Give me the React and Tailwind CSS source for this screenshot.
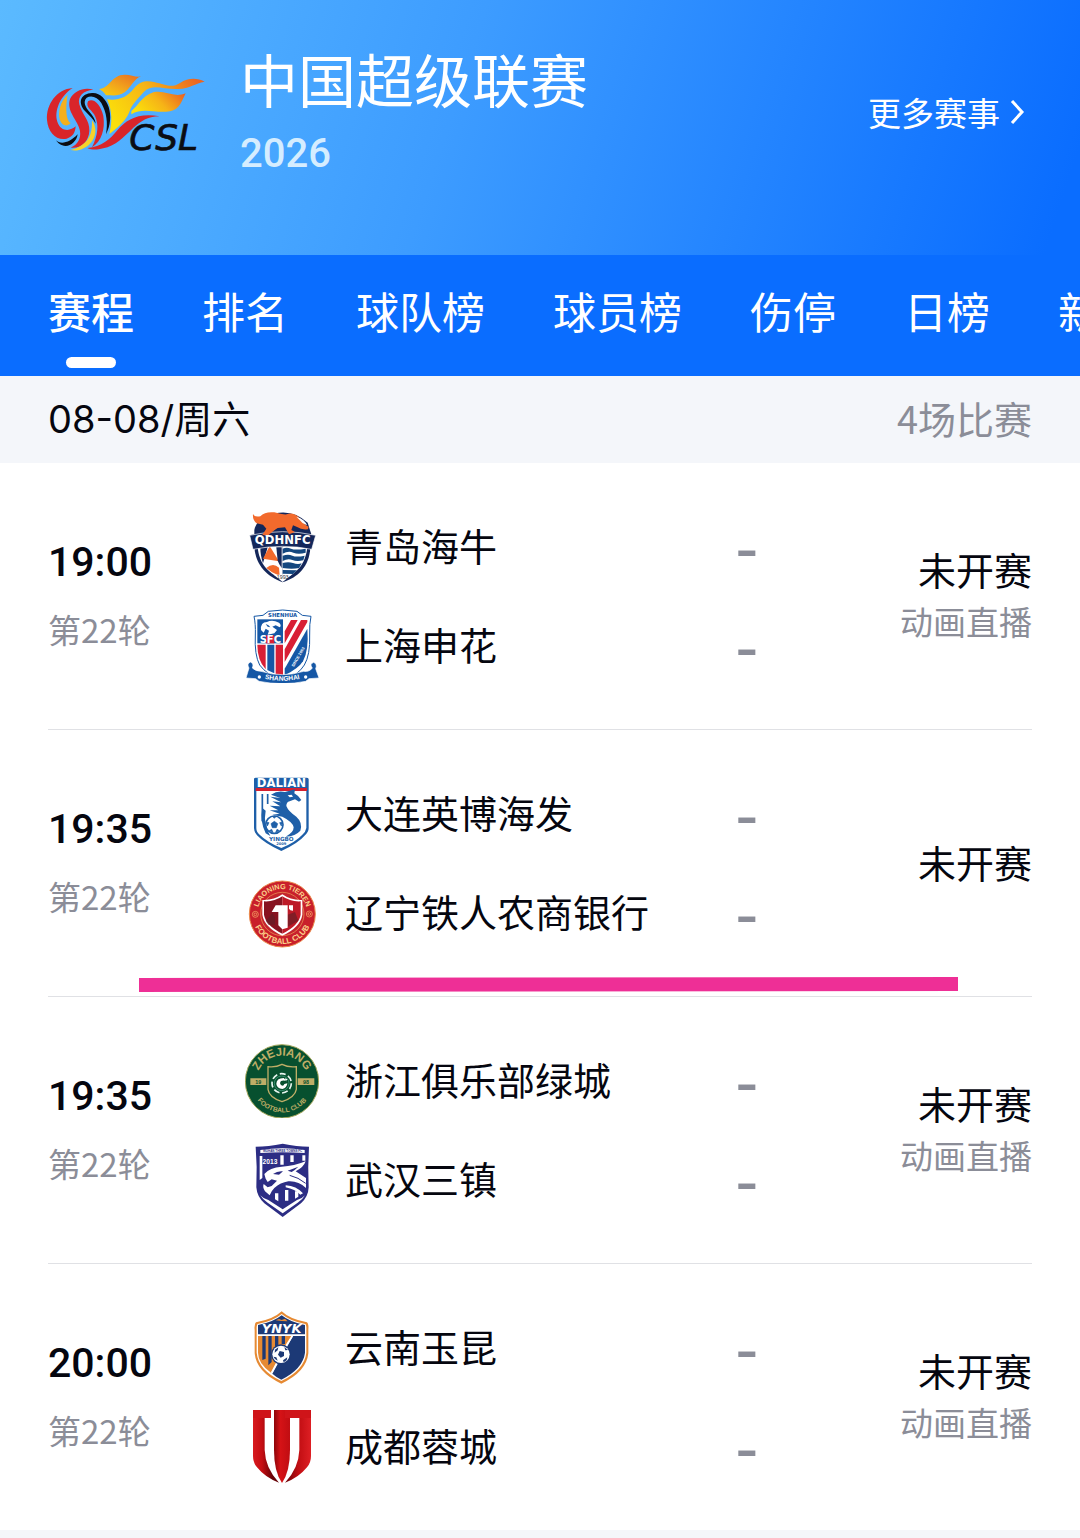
import React, { useState } from 'react';

const CslLogo = () => (
    <svg viewBox="54 60 474 246" className="w-[158px] h-[82px] shrink-0 overflow-visible" role="img" aria-label="CSL">
        <defs>
            <linearGradient id="flameTop" x1="0" x2="1" y1="1" y2="0">
                <stop offset="0" stopColor="#f8d30c" />
                <stop offset="0.45" stopColor="#f2a51c" />
                <stop offset="1" stopColor="#e86a22" />
            </linearGradient>
            <linearGradient id="flameMain" x1="0" x2="1" y1="0.6" y2="0.2">
                <stop offset="0" stopColor="#fbe00a" />
                <stop offset="0.5" stopColor="#f6b417" />
                <stop offset="1" stopColor="#ea6522" />
            </linearGradient>
        </defs>
        <path d="M207 114 C240 112 245 70 285 71 C305 71 318 80 333 76 C310 85 305 108 285 123 C265 138 245 132 228 133 C222 124 216 118 207 114Z" fill="url(#flameTop)" />
        <path d="M238 250 C246 215 248 180 231 145 C262 150 292 140 312 112 C330 90 350 88 372 93 C410 102 425 112 450 96 C475 80 500 80 524 92 C495 97 480 112 445 114 C400 116 368 96 342 122 C322 145 305 160 298 183 C288 210 262 230 238 250Z" fill="url(#flameMain)" />
        <path d="M304 180 C325 165 335 135 370 124 C405 116 430 142 467 127 C455 150 450 175 420 181 C375 188 340 168 304 190Z" fill="url(#flameMain)" />
        <path d="M389 196 C350 197 335 210 310 230 C280 260 255 285 220 292 C200 297 185 297 172 291 C215 288 240 265 262 238 C290 205 325 185 389 196Z" fill="#d9252a" />
        <path d="M128 111 C80 115 48 160 51 207 C54 245 80 270 110 263 C128 258 136 245 137 226 C120 242 92 242 82 212 C72 180 90 135 128 111Z" fill="#d9252a" />
        <path d="M113 131 C92 150 82 182 90 208 C98 228 114 226 122 216 C105 205 108 160 113 131Z" fill="#f5b01d" />
        <path d="M120 144 C132 118 165 107 190 116 C160 118 142 136 148 160 C155 190 180 207 178 240 C176 270 155 294 122 290 C145 280 153 262 150 240 C145 208 108 182 120 144Z" fill="#d9252a" />
        <path d="M186 126 C210 124 228 145 236 168 C244 195 242 222 228 250 C234 215 230 185 214 156 C203 138 184 132 170 140 C158 152 166 168 178 182 C190 196 196 205 197 218 C190 204 178 194 165 180 C142 154 152 128 186 126Z" fill="#0b0d13" />
        <path d="M174 151 C190 140 212 160 220 195 C226 235 215 270 186 289 C205 250 206 220 196 197 C188 178 165 170 174 151Z" fill="#d9252a" />
        <path d="M186 208 C201 230 200 258 180 278 C166 292 145 302 122 297 C150 290 172 275 181 250 C186 236 186 222 186 208Z" fill="#f7d22a" />
        <path d="M78 268 C92 282 120 275 143 250 C140 270 124 285 107 285 C92 284 84 276 78 268Z" fill="#0b0d13" />
        <text x="298" y="298" fontFamily="DejaVu Sans" fontSize="108" fontStyle="italic" fill="#0b0d13" stroke="#0b0d13" strokeWidth="2">CSL</text>
    </svg>
);

const HainiuLogo = () => (
    <svg viewBox="30 30 222 222" className="size-[74px]" aria-hidden="true">
        <path d="M143 247 C100 230 62 200 58 140 L58 90 Q66 52 120 40 Q175 28 218 68 L228 100 L226 145 C222 200 190 232 143 247Z" fill="#14275a" />
        <path d="M143 238 C105 222 72 195 68 140 L143 140Z" fill="#fff" />
        <path d="M143 238 C182 222 212 195 217 140 L143 140Z" fill="#fff" />
        <path d="M76 142 L98 142 L84 190 C78 172 76 156 76 142Z" fill="#14275a" />
        <path d="M104 138 L132 184 L84 176Z M94 204 Q114 186 132 203 L134 228 L110 216Z" fill="#f26a2c" />
        <path d="M124 142 L140 142 L140 204 Q132 192 128 182Z" fill="#14275a" />
        <path d="M143 146 Q155 141 168 146 T212 146 V158 Q190 164 175 158 T143 161Z M143 167 Q160 162 172 167 T209 167 L205 181 Q185 186 172 180 T143 183Z M143 189 Q160 184 174 189 T200 190 L192 204 Q172 208 143 204Z M143 210 L186 211 L174 222 L143 221Z" fill="#14477f" />
        <path d="M44 106 Q143 84 242 106 L230 148 Q143 130 54 148Z" fill="#14275a" stroke="#fff" strokeWidth="2" />
        <path d="M54 42 Q58 52 76 49 Q90 34 118 37 Q140 44 155 43 Q175 35 196 56 Q210 76 221 80 L219 88 Q198 90 188 82 L174 76 L169 90 L180 96 L162 103 L150 82 L128 84 L119 90 L97 108 L82 104 L94 86 L84 74 L65 70 Q52 60 54 42Z" fill="#f26a2c" />
        <path d="M184 50 Q210 58 216 76 Q202 72 194 60Z" fill="#fff" />
        <text x="143" y="131" textAnchor="middle" fontFamily="DejaVu Sans" fontSize="35" fontWeight="700" fill="#fff">QDHNFC</text>
        <path d="M116 224 H170 L143 246Z" fill="#fff" />
        <text x="143" y="238" textAnchor="middle" fontFamily="Liberation Sans" fontSize="16" fill="#333">1993</text>
    </svg>
);

const ShenhuaLogo = () => (
    <svg viewBox="30 27 222 222" className="size-[74px]" aria-hidden="true">
        <path d="M57 49 L84 46 L100 34 Q143 26 186 34 L202 46 L228 49 Q223 70 224 105 Q226 165 208 195 Q190 225 143 243 Q96 225 74 195 Q58 165 61 105 Q62 70 57 49Z" fill="#fff" stroke="#1557a5" strokeWidth="3" />
        <text x="143" y="51" textAnchor="middle" fontFamily="DejaVu Sans" fontSize="16" fontWeight="700" fill="#1557a5">SHENHUA</text>
        <path d="M67 58 H144 V130 H67Z" fill="#1557a5" />
        <path d="M78 90 Q76 66 96 66 Q112 58 132 68 Q141 76 134 82 L122 76 L112 80 L126 90 L118 100 L98 104 L102 92 L92 86 L86 98Z" fill="#fff" />
        <path d="M92 72 Q102 74 106 82 L98 80Z" fill="#1557a5" />
        <path d="M93 106 H118 V130 H93Z" fill="#d81f35" />
        <text x="106" y="128" textAnchor="middle" fontFamily="DejaVu Sans" fontSize="30" fontWeight="700" fill="#fff">SFC</text>
        <path d="M67 134 H92 V208 Q67 180 67 134Z M122 134 H144 V230 L122 222Z" fill="#d81f35" />
        <path d="M97 134 H118 V220 Q108 216 97 210Z" fill="#1557a5" />
        <path d="M168 60 H188 L149 130 V94Z M198 60 H217 V66 L149 186 V148Z" fill="#d81f35" />
        <path d="M217 86 Q222 150 204 184 Q190 206 149 226 V206Z" fill="#1557a5" />
        <text transform="translate(176 202) rotate(-60)" fontFamily="Liberation Sans" fontSize="12" fontWeight="700" fill="#fff">SINCE 1993</text>
        <path d="M46 186 Q34 192 42 204 L33 234 L62 236 L72 244 Q143 258 212 244 L222 236 L252 234 L242 206 Q248 192 236 187 Q222 192 232 204 Q224 216 206 214 Q143 234 78 214 Q62 214 52 204 Q58 190 46 186Z" fill="#1557a5" stroke="#fff" strokeWidth="2" />
        <path id="shBanner" d="M84 235 Q143 250 200 235" fill="none" />
        <text fontFamily="Liberation Sans" fontSize="20" fontWeight="700" fill="#fff" textAnchor="middle">
            <textPath href="#shBanner" startOffset="50%">SHANGHAI</textPath>
        </text>
        <circle cx="73" cy="231" r="5" fill="#fff" />
        <circle cx="212" cy="231" r="5" fill="#fff" />
    </svg>
);

const DalianLogo = () => (
    <svg viewBox="30 27 222 222" className="size-[74px]" aria-hidden="true">
        <path d="M57 32 Q58 29 62 29 H216 Q221 29 221 34 V180 Q221 192 210 202 Q190 226 139 249 Q88 226 66 202 Q57 192 57 180Z" fill="#1e5fa8" />
        <path d="M64 69 H214 V180 Q212 192 202 200 Q182 222 139 240 Q96 222 74 200 Q64 192 64 180Z" fill="#fff" />
        <path d="M62 60 H216 V69 H62Z" fill="#d5202f" />
        <text x="139" y="56" textAnchor="middle" fontFamily="DejaVu Sans" fontSize="35" fontWeight="700" fill="#fff">DALIAN</text>
        <path d="M82 78 V160 M98 78 V108" stroke="#1e5fa8" strokeWidth="5" />
        <path d="M108 80 Q128 66 150 72 L180 64 L178 76 Q192 84 199 96 L192 101 L180 94 L164 100 Q154 102 154 114 Q160 130 184 146 Q204 164 196 188 Q182 204 152 206 Q176 194 176 178 Q174 162 142 146 L112 140 L134 137 L104 127 L130 127 L104 113 L136 115 L112 100 L138 103 L106 86 L136 90Z" fill="#1e5fa8" />
        <path d="M82 120 Q74 160 92 196 L106 204 Q84 170 92 128Z" fill="#1e5fa8" />
        <path d="M158 82 L170 80 L174 86 L164 88Z" fill="#fff" />
        <circle cx="118" cy="170" r="26" fill="#fff" stroke="#1e5fa8" strokeWidth="5" />
        <path d="M118 160 L128 167 L124 179 H112 L108 167Z M112 145 H124 L118 151Z M94 162 L102 164 L97 174Z M142 162 L134 164 L139 174Z M103 188 L110 184 L114 193Z M133 188 L126 184 L122 193Z" fill="#1e5fa8" stroke="#1e5fa8" strokeWidth="2" />
        <text x="139" y="220" textAnchor="middle" fontFamily="DejaVu Sans" fontSize="17" fontWeight="700" fill="#1e5fa8">YINGBO</text>
        <text x="139" y="231" textAnchor="middle" fontFamily="DejaVu Sans" fontSize="11" fontWeight="700" fill="#1e5fa8">2009</text>
    </svg>
);

const TierenLogo = () => (
    <svg viewBox="30 24 222 222" className="size-[74px]" aria-hidden="true">
        <circle cx="142" cy="138" r="99" fill="#c9202b" stroke="#eb8a4c" strokeWidth="3" />
        <circle cx="142" cy="138" r="65" fill="#c4252d" stroke="#f0a25a" strokeWidth="2" />
        <path d="M82 96 Q115 98 142 79 Q169 98 202 96 V140 Q196 178 142 203 Q88 178 82 140Z" fill="#fff" />
        <path d="M87 100 Q117 102 142 85 V197 Q92 172 87 140Z" fill="#871320" />
        <path d="M197 100 Q167 102 142 85 V197 Q192 172 197 140Z" fill="#bd1a27" />
        <path d="M92 158 L112 136 L120 148 V170 H100Z M158 140 L180 132 L190 158 L158 176Z" fill="#611e26" opacity="0.65" />
        <path d="M110 132 L122 112 H158 V179 L142 184 L130 172 V132Z M162 112 H174 V128 Q164 128 162 122Z" fill="#fff" />
        <path id="trTop" d="M67 138 A75 75 0 0 1 217 138" fill="none" />
        <path id="trBottom" d="M52 138 A90 90 0 0 0 232 138" fill="none" />
        <text fontFamily="Liberation Sans" fontSize="22" fontWeight="700" fill="#fbd08a" textAnchor="middle">
            <textPath href="#trTop" startOffset="50%">LIAONING TIEREN</textPath>
        </text>
        <text fontFamily="Liberation Sans" fontSize="24" fontWeight="700" fill="#fbd08a" textAnchor="middle">
            <textPath href="#trBottom" startOffset="50%">FOOTBALL CLUB</textPath>
        </text>
        <g fill="none" stroke="#fbb56c" strokeWidth="2">
            <circle cx="61" cy="139" r="9" />
            <circle cx="61" cy="139" r="4" />
            <circle cx="223" cy="138" r="9" />
            <circle cx="223" cy="138" r="4" />
        </g>
    </svg>
);

const ZhejiangLogo = () => (
    <svg viewBox="30 30 222 222" className="size-[74px]" aria-hidden="true">
        <circle cx="141" cy="142" r="110" fill="#07502f" stroke="#a5a75b" strokeWidth="3" />
        <path d="M46 133 H94 V153 H46Z M188 133 H238 V153 H188Z" fill="#bfae67" />
        <text x="70" y="149" textAnchor="middle" fontFamily="Liberation Sans" fontSize="16" fontWeight="700" fill="#07502f">19</text>
        <text x="213" y="149" textAnchor="middle" fontFamily="Liberation Sans" fontSize="16" fontWeight="700" fill="#07502f">98</text>
        <path d="M99 98 Q122 101 141 91 Q160 101 184 98 V166 Q180 190 141 203 Q102 190 99 166Z" fill="#07502f" stroke="#bfae67" strokeWidth="4" />
        <circle cx="140" cy="148" r="29" fill="none" stroke="#e7f5ef" strokeWidth="5" strokeDasharray="18 8" />
        <circle cx="140" cy="148" r="22" fill="none" stroke="#4dab8b" strokeWidth="2" />
        <path d="M146 132 Q124 132 124 150 Q126 164 142 165 Q156 162 157 148 L148 150 Q146 157 139 154 Q132 148 138 141 Q146 138 156 142Z M150 133 L158 136 L152 141Z" fill="#fff" />
        <path id="zjTop" d="M64 142 A77 77 0 0 1 218 142" fill="none" />
        <path id="zjBottom" d="M48 142 A93 93 0 0 0 234 142" fill="none" />
        <text fontFamily="Liberation Sans" fontSize="35" fontWeight="700" fill="#bfae67" textAnchor="middle">
            <textPath href="#zjTop" startOffset="50%">ZHEJIANG</textPath>
        </text>
        <text fontFamily="Liberation Sans" fontSize="20" fontWeight="700" fill="#bfae67" textAnchor="middle">
            <textPath href="#zjBottom" startOffset="50%">FOOTBALL CLUB</textPath>
        </text>
    </svg>
);

const WuhanLogo = () => (
    <svg viewBox="30 27 222 222" className="size-[74px]" aria-hidden="true">
        <path d="M62 38 Q100 38 143 29 Q186 38 222 38 Q218 100 221 160 Q220 188 198 208 L143 249 L88 208 Q66 188 64 160 Q67 100 62 38Z" fill="#2c2d84" />
        <path d="M76 48 Q143 38 209 48 V57 Q143 52 76 57Z" fill="#fff" />
        <text x="143" y="54" textAnchor="middle" fontFamily="Liberation Sans" fontSize="9" fontWeight="700" fill="#2c2d84">WUHAN THREE TOWNS FC</text>
        <path d="M74 66 H82 V132 L74 138Z M136 64 H146 V92 H136Z M166 64 H176 V84 H166Z M202 64 H211 V80 H202Z M120 178 H130 V202 L120 196Z M150 168 H160 V200 H150Z M180 172 H190 V188 L180 194Z" fill="#fff" />
        <path d="M88 120 Q104 100 140 98 Q178 96 212 82 Q206 100 182 112 Q200 124 213 132 V162 Q190 140 160 142 Q136 146 118 162 Q108 172 104 184 L90 172 Q82 160 86 150 L98 160 L110 156 L126 140 L110 136 L98 144 L92 134Z" fill="#fff" />
        <path d="M114 120 Q128 110 144 112 L132 122Z M158 110 Q174 104 190 98 Q180 108 170 114Z" fill="#2c2d84" />
        <path d="M164 124 Q190 130 212 148" fill="none" stroke="#2c2d84" strokeWidth="3" />
        <path d="M152 154 Q184 156 204 178 L196 182 Q180 166 152 160Z" fill="#fff" />
        <path d="M76 184 Q84 198 98 206 L143 238 L188 206 Q202 198 210 184 Q202 194 186 198 L143 226 L100 198 Q84 194 76 184Z" fill="#fff" />
        <text x="105" y="89" textAnchor="middle" fontFamily="Liberation Sans" fontSize="20" fontWeight="700" fill="#fff">2013</text>
    </svg>
);

const YunnanLogo = () => (
    <svg viewBox="30 33 222 222" className="size-[74px]" aria-hidden="true">
        <path d="M140 34 Q165 58 216 67 Q222 73 220 90 V160 Q214 216 139 251 Q64 216 59 160 V90 Q57 73 63 67 Q115 58 140 34Z" fill="#e68a33" />
        <path d="M140 42 Q166 64 211 72 Q215 76 214 90 V158 Q208 210 139 243 Q70 210 65 158 V90 Q64 76 68 72 Q114 64 140 42Z" fill="#fff" />
        <path d="M140 46 Q166 67 210 75 V103 H69 V75 Q114 67 140 46Z" fill="#1c3976" />
        <path d="M69 108 H170 L108 218 Q69 190 69 158Z" fill="#e68a33" />
        <path d="M82 108 H92 V176 L82 180Z M100 108 H110 V186 L100 196Z M120 108 H130 V140 L120 150Z M140 108 H150 V132 H140Z" fill="#1c3976" />
        <path d="M174 108 H210 V158 Q204 206 139 239 Q124 232 112 221Z" fill="#1c3976" />
        <path d="M172 108 L150 142 M128 184 L110 218" stroke="#fff" strokeWidth="5" />
        <path d="M122 61 L132 57 L140 60 L150 56 L158 64 L140 63Z" fill="#e68a33" />
        <text x="140" y="100" textAnchor="middle" fontFamily="DejaVu Sans" fontSize="39" fontWeight="700" fontStyle="italic" fill="#fff">YNYK</text>
        <circle cx="138" cy="163" r="30" fill="#1c3976" />
        <circle cx="138" cy="163" r="26" fill="#fff" />
        <path d="M134 153 L147 156 L147 168 L137 173 L129 164Z M120 149 L130 142 L128 151 L119 158Z M148 141 L159 150 L151 151Z M115 170 L124 172 L128 182 Q119 178 115 170Z M144 181 L157 172 L155 181 L146 187Z" fill="#1c3976" />
    </svg>
);

const ChengduLogo = () => (
    <svg viewBox="30 30 222 222" className="size-[74px]" aria-hidden="true">
        <defs>
            <linearGradient id="cdLeft">
                <stop offset="0" stopColor="#d81a1f" />
                <stop offset="0.35" stopColor="#c50d12" />
                <stop offset="0.75" stopColor="#650206" />
            </linearGradient>
            <linearGradient id="cdMid">
                <stop offset="0" stopColor="#8c0408" />
                <stop offset="0.4" stopColor="#d51216" />
                <stop offset="1" stopColor="#c00d12" />
            </linearGradient>
            <linearGradient id="cdRight">
                <stop offset="0" stopColor="#650206" />
                <stop offset="0.5" stopColor="#c00d12" />
                <stop offset="1" stopColor="#de1f24" />
            </linearGradient>
        </defs>
        <path d="M54 30 H108 V54 H89 V150 Q91 205 132 248 Q92 234 66 202 Q54 188 54 168Z" fill="url(#cdLeft)" />
        <path d="M54 30 H108 V54 H54Z" fill="#cf1419" />
        <path d="M117 30 H165 V150 Q165 215 141 249 Q117 215 117 150Z" fill="url(#cdMid)" />
        <path d="M193 54 V150 Q191 205 150 248 Q190 234 216 202 Q228 188 228 168 V30 H193Z" fill="url(#cdRight)" />
        <path d="M150 30 H228 V54 H150Z" fill="#cf1419" />
    </svg>
);

const tabs = ['赛程', '排名', '球队榜', '球员榜', '伤停', '日榜', '新闻'];

const matches = [
    {
        id: 1,
        time: '19:00',
        live: true,
        teams: [{ name: '青岛海牛', Logo: HainiuLogo }, { name: '上海申花', Logo: ShenhuaLogo }],
    },
    {
        id: 2,
        time: '19:35',
        live: false,
        marked: true,
        teams: [{ name: '大连英博海发', Logo: DalianLogo }, { name: '辽宁铁人农商银行', Logo: TierenLogo }],
    },
    {
        id: 3,
        time: '19:35',
        live: true,
        teams: [{ name: '浙江俱乐部绿城', Logo: ZhejiangLogo }, { name: '武汉三镇', Logo: WuhanLogo }],
    },
    {
        id: 4,
        time: '20:00',
        live: true,
        teams: [{ name: '云南玉昆', Logo: YunnanLogo }, { name: '成都蓉城', Logo: ChengduLogo }],
    },
];

const MatchRow = ({ match }) => (
    <li className="relative flex items-center border-b border-[#e0e1e5] last:border-b-0 pt-[47px] pb-[46px]">
        <div className="w-[197px] shrink-0 pb-1">
            <p className="font-['Roboto',sans-serif] font-medium text-[41px] leading-[50px]">{match.time}</p>
            <p className="mt-[18px] text-[33px] leading-[48px] text-[#8b8d98]">第22轮</p>
        </div>
        <div className="flex-1 min-w-0 flex flex-col gap-[25px]">
            {match.teams.map(({ name, Logo }) => (
                <div key={name} className="flex items-center h-[74px]">
                    <Logo />
                    <span className="ml-[26px] flex-1 pb-1 text-[38px] leading-[48px] whitespace-nowrap">{name}</span>
                    <span className="pt-2 font-['Inter',sans-serif] font-semibold text-[52px] leading-[48px] text-[#8b8d98]">-</span>
                </div>
            ))}
        </div>
        <div className="w-[273px] shrink-0 pb-1 text-right">
            <p className="text-[38px] leading-[52px]">未开赛</p>
            {match.live && <p className="text-[33px] leading-[52px] text-[#8b8d98]">动画直播</p>}
        </div>
        {match.marked && (
            <svg viewBox="0 0 819 15" preserveAspectRatio="none" className="absolute left-[91px] bottom-1 w-[calc(100%-165px)] h-[15px]" aria-hidden="true">
                <path d="M0 1 L819 0 V14 L0 15Z" fill="#ee2f96" />
            </svg>
        )}
    </li>
);

const App = () => {
    const [active, setActive] = useState('赛程');

    return (
        <div className="min-h-screen overflow-x-hidden bg-[#f4f6fa] font-['Noto_Sans_CJK_SC',sans-serif] text-[#05060f]">
            <header className="flex items-center px-12 pt-[46px] pb-[77px] text-white bg-[linear-gradient(108deg,#5bbaff_0%,#3d9cff_42%,#0a6dff_97%)]">
                <CslLogo />
                <div className="ml-[34px] flex-1">
                    <h1 className="text-[58px] leading-[64px]">中国超级联赛</h1>
                    <p className="mt-5 font-['Roboto',sans-serif] font-medium text-[40px] leading-[48px] text-[#d5edff]">2026</p>
                </div>
                <a href="#more" className="flex items-center gap-2 text-[33px] leading-[48px]">
                    更多赛事
                    <svg viewBox="0 0 24 32" className="w-6 h-8" fill="none" stroke="currentColor" strokeWidth="3" aria-hidden="true">
                        <path d="M4 5 L14 16 L4 27" />
                    </svg>
                </a>
            </header>

            <nav className="flex gap-[68px] overflow-hidden bg-[#0a6dff] px-12 pt-[27px] pb-2 text-white">
                {tabs.map(tab => (
                    <button
                        key={tab}
                        onClick={() => setActive(tab)}
                        className={`flex shrink-0 flex-col items-center gap-[19px] text-[43px] leading-[56px] ${tab === active ? 'font-medium' : ''}`}
                    >
                        {tab}
                        {tab === active && <span className="w-[50px] h-[11px] rounded-full bg-white" />}
                    </button>
                ))}
            </nav>

            <div className="flex items-end justify-between px-12 pt-[13px] pb-[17px] text-[38px]">
                <h2 className="leading-[53px] font-['Inter','Noto_Sans_CJK_SC',sans-serif]">08-08/周六</h2>
                <span className="leading-[57px] text-[#8b8d98]">4场比赛</span>
            </div>

            <ul className="bg-white px-12">
                {matches.map(match => (
                    <MatchRow key={match.id} match={match} />
                ))}
            </ul>
        </div>
    );
};

export default App;
